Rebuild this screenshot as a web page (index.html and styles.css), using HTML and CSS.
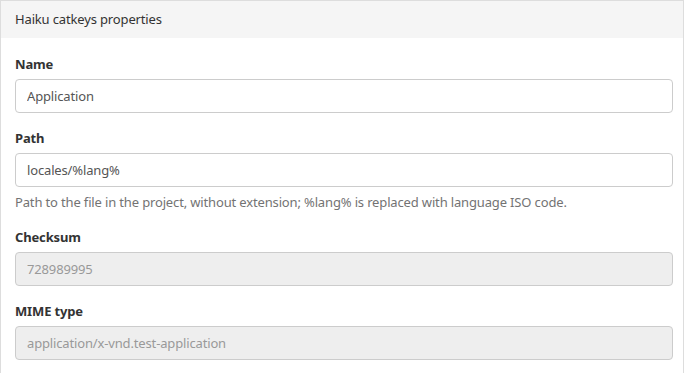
FILE: index.html
```html
<!DOCTYPE html>
<html lang="en">
<head>
    <meta charset="UTF-8">
    <title>Haiku catkeys properties</title>
    <link rel="stylesheet" href="styles.css">
</head>
<body>
    <div class="panel">
        <div class="panel-heading">Haiku catkeys properties</div>
        <form class="panel-body">
            <div class="form-group">
                <label for="name">Name</label>
                <input type="text" id="name" value="Application">
            </div>
            <div class="form-group">
                <label for="path">Path</label>
                <input type="text" id="path" value="locales/%lang%">
                <p class="help-block">Path to the file in the project, without extension; %lang% is replaced with language ISO code.</p>
            </div>
            <div class="form-group">
                <label for="checksum">Checksum</label>
                <input type="text" id="checksum" value="728989995" disabled>
            </div>
            <div class="form-group">
                <label for="mime">MIME type</label>
                <input type="text" id="mime" value="application/x-vnd.test-application" disabled>
            </div>
        </form>
    </div>
</body>
</html>
```

FILE: styles.css
```css
* {
    margin: 0;
    padding: 0;
    box-sizing: border-box;
}

body {
    font-family: 'Noto Sans', 'Open Sans', sans-serif;
    font-size: 13px;
    letter-spacing: -0.15px;
    line-height: 20px;
    color: #333;
    background: #fff;
}

.panel {
    width: 684px;
    border: 1px solid #ddd;
    border-radius: 0;
}

.panel-heading {
    background: #f5f5f5;
    height: 37px;
    padding: 8px 14px;
    line-height: 20px;
}

.panel-body {
    padding: 16px 10px 15px 14px;
}

.form-group {
    margin-bottom: 15px;
}

label {
    display: block;
    font-weight: 700;
    margin-bottom: 5px;
}

input {
    display: block;
    width: 100%;
    height: 34px;
    padding: 6px 11px;
    font-family: inherit;
    font-size: 13px;
    letter-spacing: -0.15px;
    color: #555;
    background: #fff;
    border: 1px solid #ccc;
    border-radius: 4px;
}

input:disabled {
    background: #eee;
    color: #999;
}

.help-block {
    margin-top: 5px;
    margin-bottom: 10px;
    color: #737373;
}
```
